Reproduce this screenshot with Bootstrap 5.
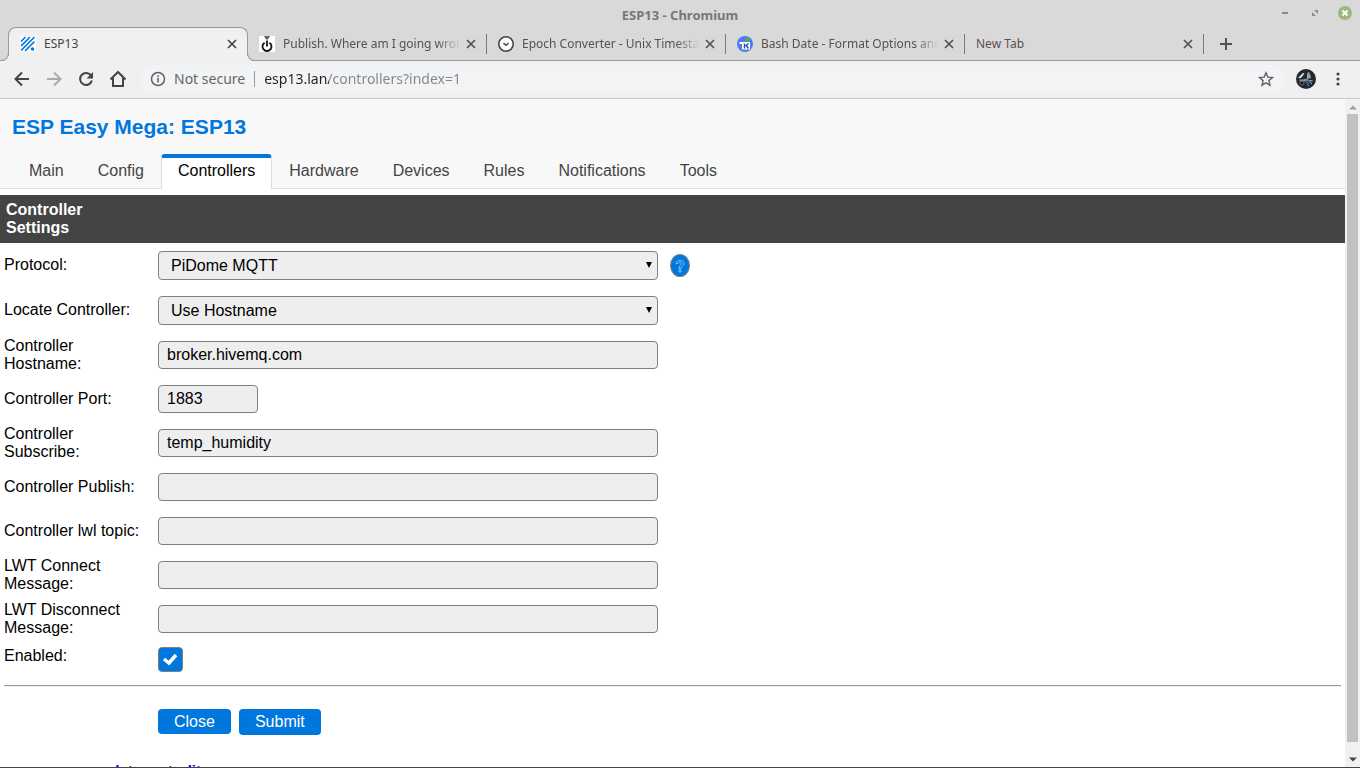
<!DOCTYPE html>
<html lang="en">
<head>
<meta charset="utf-8">
<meta name="viewport" content="width=device-width, initial-scale=1">
<title>ESP13 - Chromium</title>
<link href="https://cdn.jsdelivr.net/npm/bootstrap@5.3.0/dist/css/bootstrap.min.css" rel="stylesheet">
<style>
  :root { --accent: #0077dd; --frame: #d9d9d9; --tool: #f0f0f0; --line: #999; }
  body { font-family: "Liberation Sans", Arial, sans-serif; font-size: 16px; line-height: 18px; color: #000; }
  button { color: inherit; }
  svg { display: block; flex: none; }
  .chrome-ui { font-family: "Noto Sans", sans-serif; }
  .bare { border: 0; background: none; padding: 0; }

  /* window title */
  .titlebar { height: 27px; background: var(--frame); color: #777; font-size: 13px; font-weight: 700; padding-top: 6px; }
  .window-buttons { right: 8px; top: 6px; gap: 16px; }

  /* browser tabs */
  .tabstrip { background: var(--frame); height: 34px; padding-left: 8px; border-bottom: 1px solid var(--line); font-size: 12px; color: #5b4f4f; }
  .btab { flex: 0 1 239px; min-width: 0; height: 33px; padding: 0 10px 0 11px; gap: 8px; position: relative; }
  .btab + .btab::after { content: ""; position: absolute; right: 0; top: 7px; height: 20px; border-right: 1px solid #807878; }
  .btab.current { flex-basis: 240px; height: 34px; background: var(--tool); border: 1px solid var(--line); border-bottom: 0; border-radius: 8px 8px 0 0; padding: 0 9px 2px 11px; color: #444; }
  .btab.current::before, .btab.current::after { content: ""; position: absolute; bottom: 0; width: 8px; height: 8px; border-bottom: 1px solid var(--line); z-index: 1; }
  .btab.current::before { left: -8px; border-right: 1px solid var(--line); border-bottom-right-radius: 8px; box-shadow: 3px 3px 0 var(--tool); clip-path: inset(0 -1px 0 0); background: var(--frame); }
  .btab.current::after { right: -8px; border-left: 1px solid var(--line); border-bottom-left-radius: 8px; box-shadow: -3px 3px 0 var(--tool); clip-path: inset(0 0 0 -1px); background: var(--frame); }
  .btab-title { flex: 1 1 0; overflow: hidden; white-space: nowrap; }
  .fade-end { margin-right: -4px; -webkit-mask-image: linear-gradient(to right, #000 calc(100% - 24px), transparent); mask-image: linear-gradient(to right, #000 calc(100% - 24px), transparent); }
  .new-tab { width: 20px; margin-left: 12px; }

  /* toolbar */
  .toolbar { background: var(--tool); height: 38px; padding: 0 12px 2px; border-bottom: 1px solid #c9c9c9; color: #444; }
  .nav-buttons { gap: 12px; margin-right: 13px; }
  .omnibox { height: 28px; border-radius: 14px; background: #f1f3f4; padding: 0 10px 0 9px; font-size: 14px; color: #666; }
  .not-secure { margin: 0 9px 0 8px; }
  .omni-sep { height: 16px; border-left: 1px solid #999; margin-right: 9px; }
  .url { outline: 0; min-width: 0; height: 24px; color: transparent; caret-color: #222; background: linear-gradient(to right, #202124 65px, #80868b 65px); -webkit-background-clip: text; background-clip: text; }

  /* page */
  .page-head { background: #f8f8f8; border-bottom: 1px solid #ddd; padding: 15px 12px 0; }
  .page-head h1 { font-size: 21px; line-height: 26px; font-weight: 700; color: var(--accent); margin: 0 0 14px; }
  .menu-tabs { margin-bottom: -1px; }
  .menu-tabs a { padding: 4px 16px 9px; border: 1px solid transparent; border-top: 4px solid transparent; border-bottom: 0; border-radius: 4px 4px 0 0; color: #444; text-decoration: none; }
  .menu-tabs a.active { background: #fff; color: #000; border-color: #ddd; border-top-color: var(--accent); }
  .section-title { background: #444; color: #fff; font-size: 16px; line-height: 18px; font-weight: 700; padding: 6px; margin: 6px 0 0; }
  .section-title span { display: block; width: 140px; }
  .field-row { min-height: 44px; padding-left: 4px; }
  .field-label { flex: 0 0 144px; margin-right: 10px; }
  .select-row .field-label { padding-bottom: 2px; }
  .field { width: 500px; height: 28px; border: 1px solid gray; border-radius: 4px; background-color: #eee; color: #000; padding: 4px 8px; }
  .field-port { width: 100px; }
  select.field { appearance: none; height: 29px; margin: 8px 0; padding: 4px 12px; background-image: url("data:image/svg+xml,%3Csvg xmlns='http://www.w3.org/2000/svg' width='6' height='6'%3E%3Cpath d='M0 0h6L3 6z'/%3E%3C/svg%3E"); background-repeat: no-repeat; background-position: right 5px top 10px; }
  .help { width: 20px; height: 23px; border: 1px solid gray; border-radius: 50%; background: var(--accent); margin-left: 12px; }
  .enabled-row { padding: 6px 0 0 4px; }
  .tick { appearance: none; width: 25px; height: 25px; border: 1px solid gray; border-radius: 4px; margin: 0; background: #eee; }
  .tick:checked { background: var(--accent) url("data:image/svg+xml,%3Csvg xmlns='http://www.w3.org/2000/svg' width='23' height='23'%3E%3Cpath d='M5 11l5 4 7-8' fill='none' stroke='white' stroke-width='3.500'/%3E%3C/svg%3E") no-repeat; }
  .rule { height: 2px; border: 0; border-top: 1px solid #999; border-bottom: 1px solid #eee; opacity: 1; margin: 13px 4px 22px; }
  .action-row { padding-left: 4px; }
  .action { background: var(--accent); color: #fff; border: 0; border-radius: 4px; padding: 4px 16px; line-height: 18px; text-decoration: none; }
  a.action { padding-bottom: 3px; }
  .credit { font-size: 13px; font-weight: 700; color: var(--accent); margin: 27px 0 0; white-space: nowrap; }
  .credit a { font-size: 15px; color: #00f; text-decoration: none; }
  .scrollrail { flex: 0 0 15px; background: #f1f1f1; padding: 6px 0 5px; }
  .scroll-thumb { width: 11px; background: #c1c1c1; margin: 4px 0 15px; }
  .window-edge { border-bottom: 1px solid #444; }
</style>
</head>
<body class="vh-100 overflow-hidden d-flex flex-column window-edge">

<header class="chrome-ui flex-shrink-0">
  <div class="titlebar text-center position-relative">ESP13 - Chromium
    <div class="window-buttons position-absolute d-flex">
      <button class="bare" aria-label="Minimize"><svg width="14" height="14"><path d="M4 7h6" stroke="#8a8a8a" stroke-width="2"/></svg></button>
      <button class="bare" aria-label="Restore"><svg width="14" height="14"><path d="M6 4h4v4zM4 6v4h4z" fill="#8a8a8a"/></svg></button>
      <button class="bare" aria-label="Close window"><svg width="14" height="14"><circle cx="7" cy="7" r="7" fill="#9ab87c"/><path d="M4.500 4.500l5 5m0-5l-5 5" stroke="#fff" stroke-width="2"/></svg></button>
    </div>
  </div>

  <div class="tabstrip d-flex" role="tablist">
    <div class="btab current d-flex align-items-center" role="tab" aria-selected="true">
      <svg width="16" height="16"><path fill="#fff" d="M0 0h16v16H0z"/><g stroke="#0077dd" stroke-width="1.700" stroke-linecap="round"><path d="M1.500 5l3.500-3.500M1.500 9.500l8-8M1.500 14l12.500-12.500M5.500 14.500l8.500-8.500"/></g><circle cx="12.500" cy="13" r="1.800" fill="#0077dd"/></svg>
      <span class="btab-title">ESP13</span>
      <button class="bare" aria-label="Close ESP13"><svg width="12" height="12"><path d="M2 2l8 8m0-8l-8 8" stroke="#444" stroke-width="1.700"/></svg></button>
    </div>
    <div class="btab d-flex align-items-center" role="tab">
      <svg width="16" height="16"><path fill="#fff" d="M0 0h16v16H0z"/><path d="M5 0h6L9 3.500H7z" fill="#666"/><path d="M5.600 6.700a4.500 4.500 0 1 0 4.800 0M8 4.500v6" fill="none" stroke="#111" stroke-width="1.800"/></svg>
      <span class="btab-title fade-end">Publish. Where am I going wrong?</span>
      <button class="bare" aria-label="Close Publish"><svg width="12" height="12"><path d="M2 2l8 8m0-8l-8 8" stroke="#5b4f4f" stroke-width="1.700"/></svg></button>
    </div>
    <div class="btab d-flex align-items-center" role="tab">
      <svg width="16" height="16"><circle cx="8" cy="8" r="7.200" fill="#fff" stroke="#444" stroke-width="1.600"/><path d="M5.500 7L8 9.200 10.500 7" fill="none" stroke="#444" stroke-width="1.500"/></svg>
      <span class="btab-title fade-end">Epoch Converter - Unix Timestamp</span>
      <button class="bare" aria-label="Close Epoch Converter"><svg width="12" height="12"><path d="M2 2l8 8m0-8l-8 8" stroke="#5b4f4f" stroke-width="1.700"/></svg></button>
    </div>
    <div class="btab d-flex align-items-center" role="tab">
      <svg width="16" height="16"><circle cx="8" cy="8" r="8" fill="#4a7dee"/><path d="M2.500 6H13v7.500H5V8H2.500z" fill="#fff"/><path d="M7.500 7.500v5M11.500 7.500L8.500 10M9.300 9.500l2.200 3" fill="none" stroke="#3a4cab" stroke-width="1.500"/><circle cx="10.500" cy="3.500" r="2" fill="#58b51e"/></svg>
      <span class="btab-title fade-end">Bash Date - Format Options and Examples</span>
      <button class="bare" aria-label="Close Bash Date"><svg width="12" height="12"><path d="M2 2l8 8m0-8l-8 8" stroke="#5b4f4f" stroke-width="1.700"/></svg></button>
    </div>
    <div class="btab d-flex align-items-center" role="tab">
      <span class="btab-title">New Tab</span>
      <button class="bare" aria-label="Close New Tab"><svg width="12" height="12"><path d="M2 2l8 8m0-8l-8 8" stroke="#5b4f4f" stroke-width="1.700"/></svg></button>
    </div>
    <button class="bare new-tab d-flex align-items-center justify-content-center" aria-label="Open a tab"><svg width="12" height="12"><path d="M6 0v12M0 6h12" stroke="#5b4f4f" stroke-width="2"/></svg></button>
  </div>

  <div class="toolbar d-flex align-items-center">
    <div class="nav-buttons d-flex">
      <button class="bare" aria-label="Back"><svg width="20" height="20" fill="none" stroke="#444" stroke-width="2"><path d="M17 10H4M10 3.500L3.500 10l6.500 6.500"/></svg></button>
      <button class="bare" aria-label="Forward"><svg width="20" height="20" fill="none" stroke="#aaa" stroke-width="2"><path d="M3 10h13M10 3.500l6.500 6.500-6.500 6.500"/></svg></button>
      <button class="bare" aria-label="Reload"><svg width="20" height="20"><path d="M15.200 6.800A6 6 0 1 0 15.900 11.500" fill="none" stroke="#444" stroke-width="2"/><path d="M17 3v6.500h-6.500z" fill="#444"/></svg></button>
      <button class="bare" aria-label="Home"><svg width="20" height="20" fill="none" stroke="#444" stroke-width="2"><path d="M2.500 10.500L10 3l7.500 7.500M5 9v8h10V9"/></svg></button>
    </div>
    <div class="omnibox d-flex align-items-center flex-grow-1">
      <svg width="16" height="16"><circle cx="8" cy="8" r="6.500" fill="none" stroke="#5f6368" stroke-width="1.500"/><path d="M8 7v4.500M8 4.300v1.600" stroke="#5f6368" stroke-width="1.600"/></svg>
      <span class="not-secure">Not secure</span>
      <span class="omni-sep"></span>
      <input class="bare url flex-grow-1" type="text" aria-label="Address" value="esp13.lan/controllers?index=1">
      <button class="bare" aria-label="Bookmark"><svg width="16" height="16"><path d="M8 1.800l1.800 4.300 4.700.4-3.600 3.100 1.100 4.600L8 11.800l-4 2.400 1.100-4.600-3.600-3.100 4.700-.4z" fill="none" stroke="#5f6368" stroke-width="1.400"/></svg></button>
    </div>
    <button class="bare ms-2 ps-1" aria-label="Profile"><svg width="20" height="20"><circle cx="10" cy="10" r="10" fill="#25282b"/><path d="M2 9l5-5 1.500.5L5 9z" fill="#dfe5e8"/><path d="M3 10.500h4l3-1 3 1.500 4 0-1 1.500H4z" fill="#8793a0"/><path d="M11 5h3l1 4-4 1z" fill="#8fa5c8"/><path d="M9.500 12l3-1 1 6-2 1z" fill="#34598a"/><circle cx="6" cy="14" r="2" fill="#111" stroke="#7d878e" stroke-width=".8"/><path d="M14 13l2 2" stroke="#aeb6bd"/><circle cx="12.500" cy="4.500" r="1.300" fill="#b58c77"/></svg></button>
    <button class="bare ms-3 pe-1" aria-label="Menu"><svg width="12" height="16" fill="#444"><circle cx="6" cy="3" r="1.600"/><circle cx="6" cy="8" r="1.600"/><circle cx="6" cy="13" r="1.600"/></svg></button>
  </div>
</header>

<div class="d-flex flex-grow-1 overflow-hidden">
  <main class="flex-grow-1 overflow-hidden">
    <div class="page-head">
      <h1>ESP Easy Mega: ESP13</h1>
      <nav class="menu-tabs d-flex">
        <a href="#">Main</a><a href="#">Config</a><a href="#" class="active" aria-current="page">Controllers</a><a href="#">Hardware</a><a href="#">Devices</a><a href="#">Rules</a><a href="#">Notifications</a><a href="#">Tools</a>
      </nav>
    </div>
    <h2 class="section-title"><span>Controller Settings</span></h2>
    <form>
      <div class="field-row select-row d-flex align-items-center">
        <label class="field-label" for="protocol">Protocol:</label>
        <select class="field" id="protocol"><option>PiDome MQTT</option></select>
        <button type="button" class="help p-0 d-flex align-items-center justify-content-center" aria-label="Help"><svg width="12" height="14" fill="none"><path d="M2 4.500C2 .5 10 .5 10 4.500c0 2.500-3 2.500-3 5H5c0-3 2.500-3.500 2.500-5 0-1.500-3-1.500-3.500 0zM5 11h2v2H5z" stroke="#9fd0ff" stroke-width=".8"/></svg></button>
      </div>
      <div class="field-row select-row d-flex align-items-center">
        <label class="field-label" for="locate">Locate Controller:</label>
        <select class="field" id="locate"><option>Use Hostname</option></select>
      </div>
      <div class="field-row d-flex align-items-center">
        <label class="field-label" for="hostname">Controller Hostname:</label>
        <input class="field" id="hostname" type="text" value="broker.hivemq.com">
      </div>
      <div class="field-row d-flex align-items-center">
        <label class="field-label" for="port">Controller Port:</label>
        <input class="field field-port" id="port" type="text" value="1883">
      </div>
      <div class="field-row d-flex align-items-center">
        <label class="field-label" for="subscribe">Controller Subscribe:</label>
        <input class="field" id="subscribe" type="text" value="temp_humidity">
      </div>
      <div class="field-row d-flex align-items-center">
        <label class="field-label" for="publish">Controller Publish:</label>
        <input class="field" id="publish" type="text">
      </div>
      <div class="field-row d-flex align-items-center">
        <label class="field-label" for="lwl">Controller lwl topic:</label>
        <input class="field" id="lwl" type="text">
      </div>
      <div class="field-row d-flex align-items-center">
        <label class="field-label" for="connect">LWT Connect Message:</label>
        <input class="field" id="connect" type="text">
      </div>
      <div class="field-row d-flex align-items-center">
        <label class="field-label" for="disconnect">LWT Disconnect Message:</label>
        <input class="field" id="disconnect" type="text">
      </div>
      <div class="enabled-row d-flex align-items-start">
        <label class="field-label" for="enabled">Enabled:</label>
        <input class="tick" id="enabled" type="checkbox" checked>
      </div>
      <hr class="rule">
      <div class="action-row d-flex">
        <span class="field-label"></span>
        <div class="d-flex gap-2 align-items-start"><a class="action" href="#">Close</a><button class="action" type="button">Submit</button></div>
      </div>
    </form>
    <p class="credit">Powered by <a href="#">www.letscontrolit.com</a></p>
  </main>

  <div class="scrollrail d-flex flex-column align-items-center">
    <svg width="8" height="5"><path d="M0 4.500L4 .5l4 4z" fill="#a0a0a0"/></svg>
    <div class="scroll-thumb flex-grow-1"></div>
    <svg width="8" height="5"><path d="M0 .5h8l-4 4z" fill="#444"/></svg>
  </div>
</div>

<script src="https://cdn.jsdelivr.net/npm/bootstrap@5.3.0/dist/js/bootstrap.bundle.min.js"></script>
</body>
</html>
